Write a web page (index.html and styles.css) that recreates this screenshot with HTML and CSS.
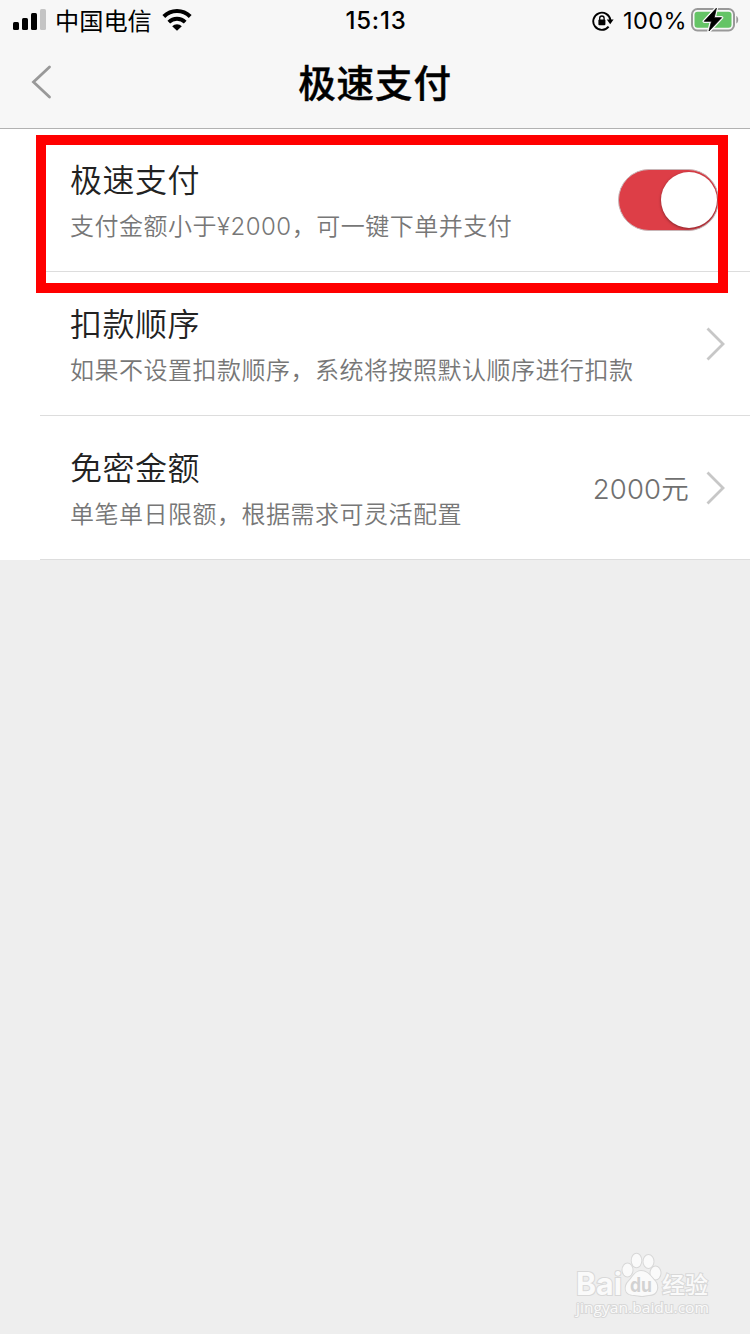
FILE: index.html
```html
<!DOCTYPE html>
<html lang="zh-CN">
<head>
  <meta charset="UTF-8">
  <meta name="viewport" content="width=device-width, initial-scale=1.0">
  <title>极速支付</title>
  <link rel="stylesheet" href="styles.css">
</head>
<body>
  <header class="header">
    <div class="status-bar">
      <div class="status-left">
        <svg class="signal" width="33" height="22" viewBox="0 0 33 22">
          <rect x="0" y="13" width="6" height="8" rx="1.5"/>
          <rect x="9" y="9" width="6" height="12" rx="1.5"/>
          <rect x="18" y="4" width="6" height="17" rx="1.5"/>
          <rect x="27" y="0" width="6" height="21" rx="1.5" fill="#c4c4c4"/>
        </svg>
        <span class="carrier">中国电信</span>
        <svg class="wifi" width="30" height="22" viewBox="0 0 30 22">
          <path d="M1.8 7.5a18.6 18.6 0 0 1 26.4 0" fill="none" stroke="#000" stroke-width="4"/>
          <path d="M6.8 13.2a11.5 11.5 0 0 1 16.4 0" fill="none" stroke="#000" stroke-width="3.8"/>
          <path d="M15 21.8l-4.8-4.6a6.6 6.6 0 0 1 9.6 0z"/>
        </svg>
      </div>
      <span class="time">15:13</span>
      <div class="status-right">
        <svg class="lock" width="22" height="20" viewBox="0 0 22 20">
          <path d="M16.6 15.6a8.6 8.6 0 1 1 1.8-6.4" fill="none" stroke="#000" stroke-width="1.9"/>
          <path d="M14.8 8.6h6.8l-3.4 4.6z"/>
          <rect x="6.4" y="8.5" width="7" height="5.7" rx="1"/>
          <path d="M7.7 9V7.2a2.2 2.2 0 0 1 4.4 0V9" fill="none" stroke="#000" stroke-width="1.3"/>
        </svg>
        <span class="percent">100%</span>
        <svg class="battery" width="48" height="24" viewBox="0 0 48 24">
          <rect x="1" y="1" width="42" height="21.5" rx="5.5" fill="none" stroke="#999" stroke-width="2"/>
          <rect x="3.5" y="3.8" width="37" height="16" rx="3" fill="#65c466"/>
          <path d="M45.3 8v7.6c2.5-1.2 2.5-6.4 0-7.6z" fill="#999"/>
          <path d="M25.4.2L13.2 13.3h7.3L18 23 30.6 9.7h-7.4z" stroke="#f7f7f7" stroke-width="3.4" stroke-linejoin="round"/>
          <path d="M25.4.2L13.2 13.3h7.3L18 23 30.6 9.7h-7.4z" stroke="#000" stroke-width="0.8"/>
        </svg>
      </div>
    </div>
    <div class="nav">
      <a class="back" href="#">
        <svg width="22" height="34" viewBox="0 0 22 34">
          <path d="M19.5 2L3.5 17l16 15" fill="none" stroke="#999" stroke-width="2.8" stroke-linecap="round"/>
        </svg>
      </a>
      <h1>极速支付</h1>
    </div>
  </header>

  <main class="list">
    <div class="row">
      <div class="row-text">
        <h2>极速支付</h2>
        <p>支付金额小于¥2000，可一键下单并支付</p>
      </div>
      <div class="switch"><span class="knob"></span></div>
    </div>
    <div class="row">
      <div class="row-text">
        <h2>扣款顺序</h2>
        <p>如果不设置扣款顺序，系统将按照默认顺序进行扣款</p>
      </div>
      <svg class="arrow" width="20" height="34" viewBox="0 0 20 34">
        <path d="M1.5 1.5L17 17 1.5 32.5" fill="none" stroke="#c7c7c7" stroke-width="2.8"/>
      </svg>
    </div>
    <div class="row">
      <div class="row-text">
        <h2>免密金额</h2>
        <p>单笔单日限额，根据需求可灵活配置</p>
      </div>
      <span class="value">2000元</span>
      <svg class="arrow" width="20" height="34" viewBox="0 0 20 34">
        <path d="M1.5 1.5L17 17 1.5 32.5" fill="none" stroke="#c7c7c7" stroke-width="2.8"/>
      </svg>
    </div>
    <div class="highlight"></div>
  </main>

  <svg class="watermark" width="150" height="72" viewBox="0 0 150 72">
    <g class="mark">
      <text class="mark-logo" x="5" y="43" textLength="46" lengthAdjust="spacingAndGlyphs">Bai</text>
      <ellipse cx="56.5" cy="18" rx="5" ry="6.5"/>
      <ellipse cx="65.5" cy="8.5" rx="4.8" ry="6.8"/>
      <ellipse cx="77.5" cy="9.5" rx="5" ry="6.5"/>
      <ellipse cx="84.5" cy="21" rx="5" ry="6.5"/>
      <path d="M70 19c-6 0-8 6-12 10-5 5-5 14 5 14 3 0 5 1 8 1s4-1 7-1c9 0 10-9 6-14-4-4-7-10-14-10z"/>
      <text class="mark-cn" x="91" y="41" textLength="46" lengthAdjust="spacingAndGlyphs">经验</text>
      <text class="mark-url" x="5" y="61" textLength="133" lengthAdjust="spacingAndGlyphs">jingyan.baidu.com</text>
    </g>
    <text class="mark-du" x="59" y="40" textLength="22" lengthAdjust="spacingAndGlyphs">du</text>
  </svg>
</body>
</html>
```
FILE: styles.css
```css
* {
  box-sizing: border-box;
  margin: 0;
  padding: 0;
}

body {
  min-height: 1334px;
  font-family: Inter, 'Noto Sans CJK SC', sans-serif;
  background: #eee;
  color: #222;
}

svg {
  display: block;
  flex-shrink: 0;
}

/* Header */
.header {
  height: 129px;
  background: #f7f7f7;
  border-bottom: 1px solid #b2b2b2;
  color: #000;
}

.status-bar {
  display: grid;
  grid-template-columns: 1fr auto 1fr;
  align-items: center;
  height: 40px;
  padding: 0 11px 0 13px;
  font-size: 24px;
  line-height: 38px;
}

.status-left,
.status-right {
  display: flex;
  align-items: center;
  height: 39px;
}

.status-right {
  justify-content: flex-end;
}

.lock {
  margin-top: 2px;
}

.carrier {
  margin: 0 10px 0 9px;
  font-family: 'Noto Sans CJK SC', sans-serif;
  font-size: 24.2px;
}

.time {
  padding-top: 1px;
  font-weight: 500;
  font-size: 24px;
  letter-spacing: 0.8px;
}

.percent {
  margin: 1px 4px 0 9px;
  font-size: 23.5px;
  letter-spacing: 0.4px;
}

.nav {
  display: grid;
  grid-template-columns: 70px 1fr 70px;
  align-items: center;
  height: 84px;
}

.back {
  padding-left: 30px;
}

.nav h1 {
  padding-top: 4px;
  font-size: 37.5px;
  font-weight: 500;
  line-height: 54px;
  letter-spacing: 0.9px;
  text-align: center;
  -webkit-text-stroke: 0.4px #000;
}

/* List */
.list {
  position: relative;
  background: #fff;
  padding-left: 40px;
}

.row {
  display: flex;
  align-items: center;
  height: 144px;
  padding: 0 24px 0 30px;
  border-bottom: 1px solid #ddd;
}

.row:first-child {
  height: 143px;
  padding-right: 31px;
}

.row-text {
  flex: 1;
  padding-top: 8px;
}

.row:first-child .row-text {
  padding-top: 7px;
}

.row h2 {
  font-size: 32px;
  font-weight: 350;
  line-height: 46px;
  letter-spacing: 0.5px;
}

.row p {
  font-size: 24px;
  font-weight: 350;
  line-height: 46px;
  letter-spacing: 0.5px;
  color: #777;
  white-space: nowrap;
}

.value {
  margin: 0 17px 2px 0;
  font-size: 27.5px;
  font-weight: 350;
  letter-spacing: 0.2px;
  color: #707070;
}

.switch {
  display: flex;
  justify-content: flex-end;
  width: 101px;
  height: 62px;
  margin-bottom: 1px;
  padding: 2px 1px;
  border: 1px solid #c9b5b7;
  border-radius: 31px;
  background: #dd3e47;
}

.knob {
  width: 56px;
  height: 56px;
  border-radius: 50%;
  background: #fff;
  box-shadow: 0 1px 3px rgba(0, 0, 0, 0.4);
}

.highlight {
  position: absolute;
  top: 6px;
  left: 36px;
  width: 692px;
  height: 158px;
  border: 10px solid #f00;
}

/* Watermark */
.watermark {
  position: absolute;
  left: 571px;
  top: 1252px;
}

.mark {
  fill: #fafafa;
  stroke: #d8d8d8;
  stroke-width: 2px;
  paint-order: stroke;
}

.mark-logo,
.mark-du {
  font-family: Inter, sans-serif;
  font-size: 31px;
  font-weight: 700;
}

.mark-du {
  font-size: 20px;
  fill: #d2d2d2;
}

.mark-cn {
  font-family: 'Noto Sans CJK SC', sans-serif;
  font-size: 23px;
  font-weight: 500;
}

.mark-url {
  font-family: 'Open Sans', sans-serif;
  font-size: 15px;
}
```
